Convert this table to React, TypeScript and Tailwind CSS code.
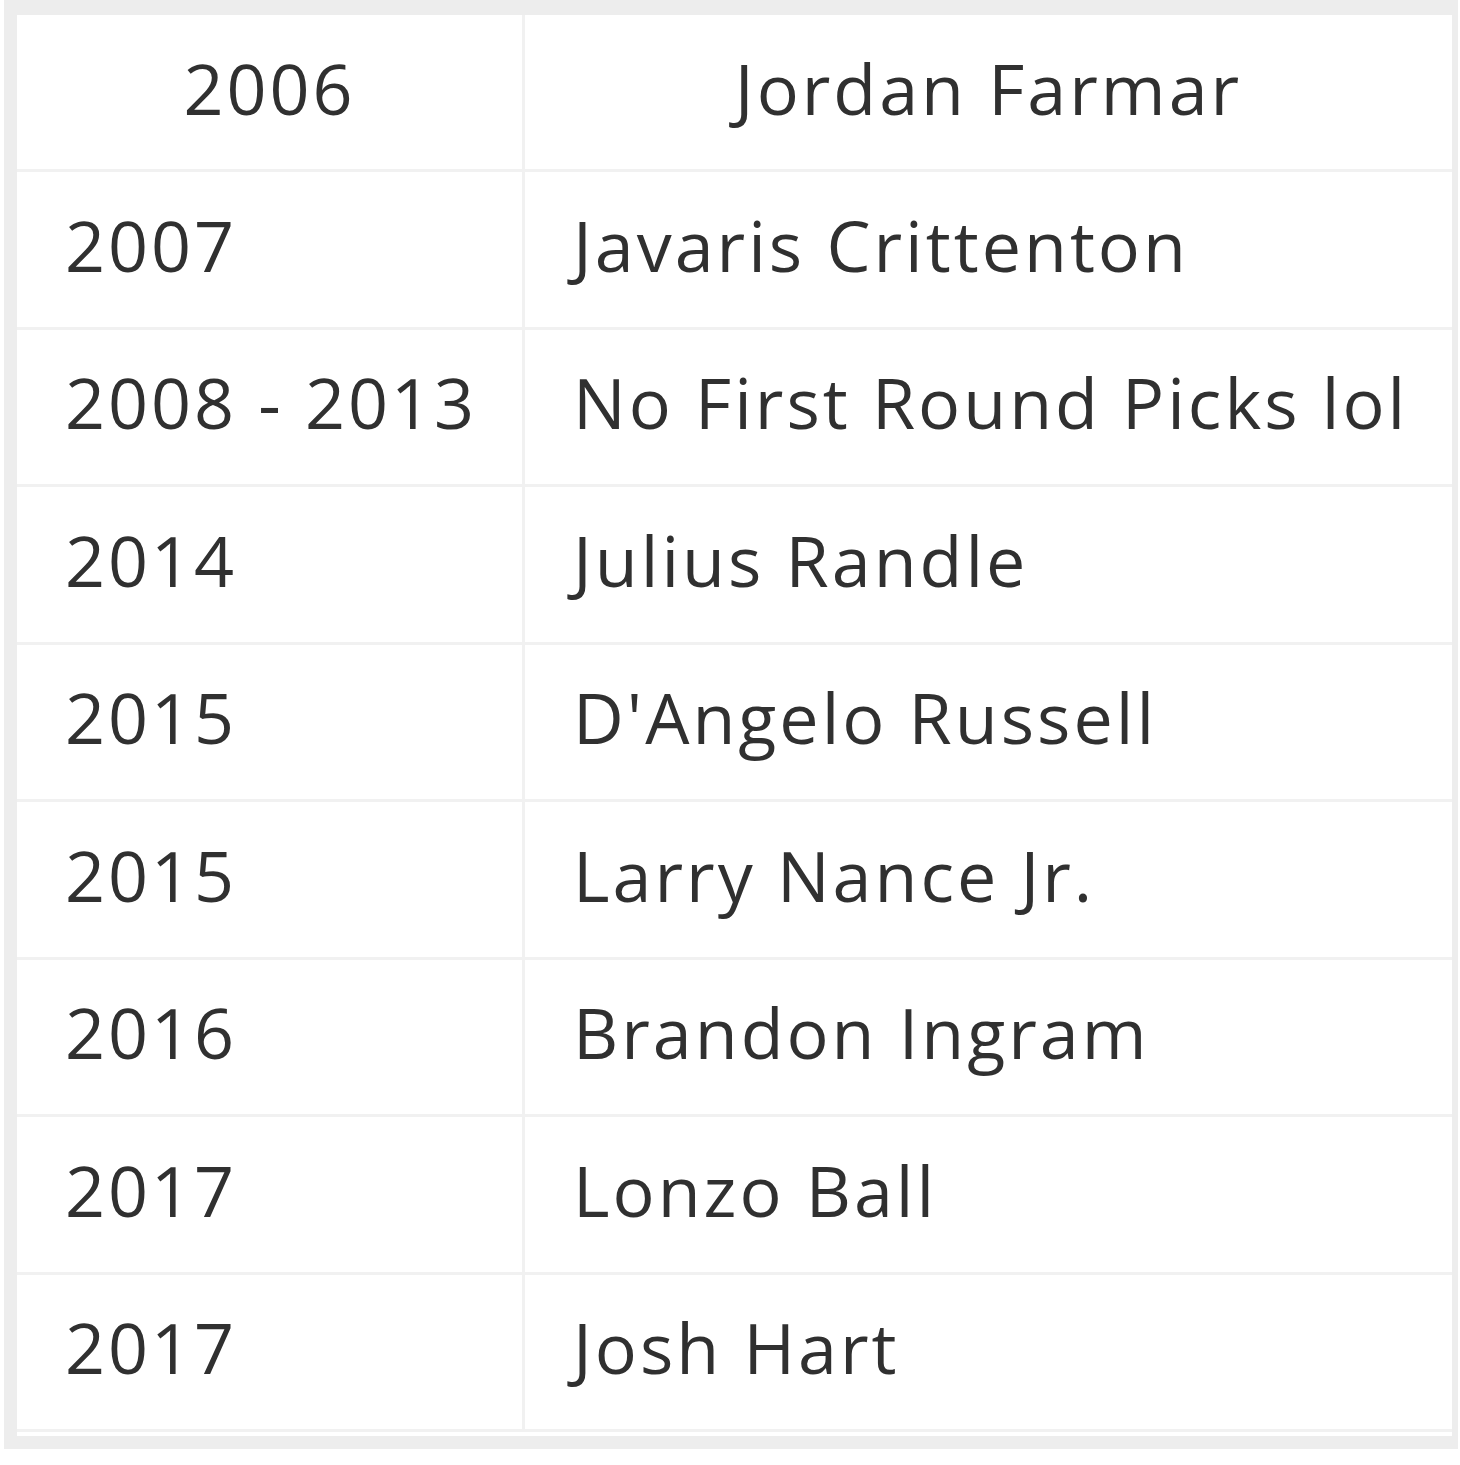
const rows: [string, string][] = [
  ["2007", "Javaris Crittenton"],
  ["2008 - 2013", "No First Round Picks lol"],
  ["2014", "Julius Randle"],
  ["2015", "D'Angelo Russell"],
  ["2015", "Larry Nance Jr."],
  ["2016", "Brandon Ingram"],
  ["2017", "Lonzo Ball"],
  ["2017", "Josh Hart"],
];

export default function App() {
  return (
    <div className="w-[1460px] h-[1465px] bg-white pl-[4px] pr-[2px] font-['Open_Sans',sans-serif] text-[70px] tracking-[3px] text-[#303030]">
      <div className="bg-[#ededed] pt-[15px] pl-[13px] pr-[6px] pb-[13px]">
        <div className="bg-white pb-[4px]">
          <div className="grid grid-cols-[505px_1fr] gap-[3px] bg-[#f1f1f1] pb-[3px]">
            <div className="bg-white h-[154px] flex items-center justify-center pb-[8px]">2006</div>
            <div className="bg-white h-[154px] flex items-center justify-center pb-[8px]">Jordan Farmar</div>
            {rows.map(([year, name], i) => (
              <div key={i} className="contents">
                <div className="bg-white h-[154.5px] flex items-center pl-[48px] pb-[8px]">{year}</div>
                <div className="bg-white h-[154.5px] flex items-center pl-[48px] pb-[8px] whitespace-nowrap">{name}</div>
              </div>
            ))}
          </div>
        </div>
      </div>
    </div>
  );
}
